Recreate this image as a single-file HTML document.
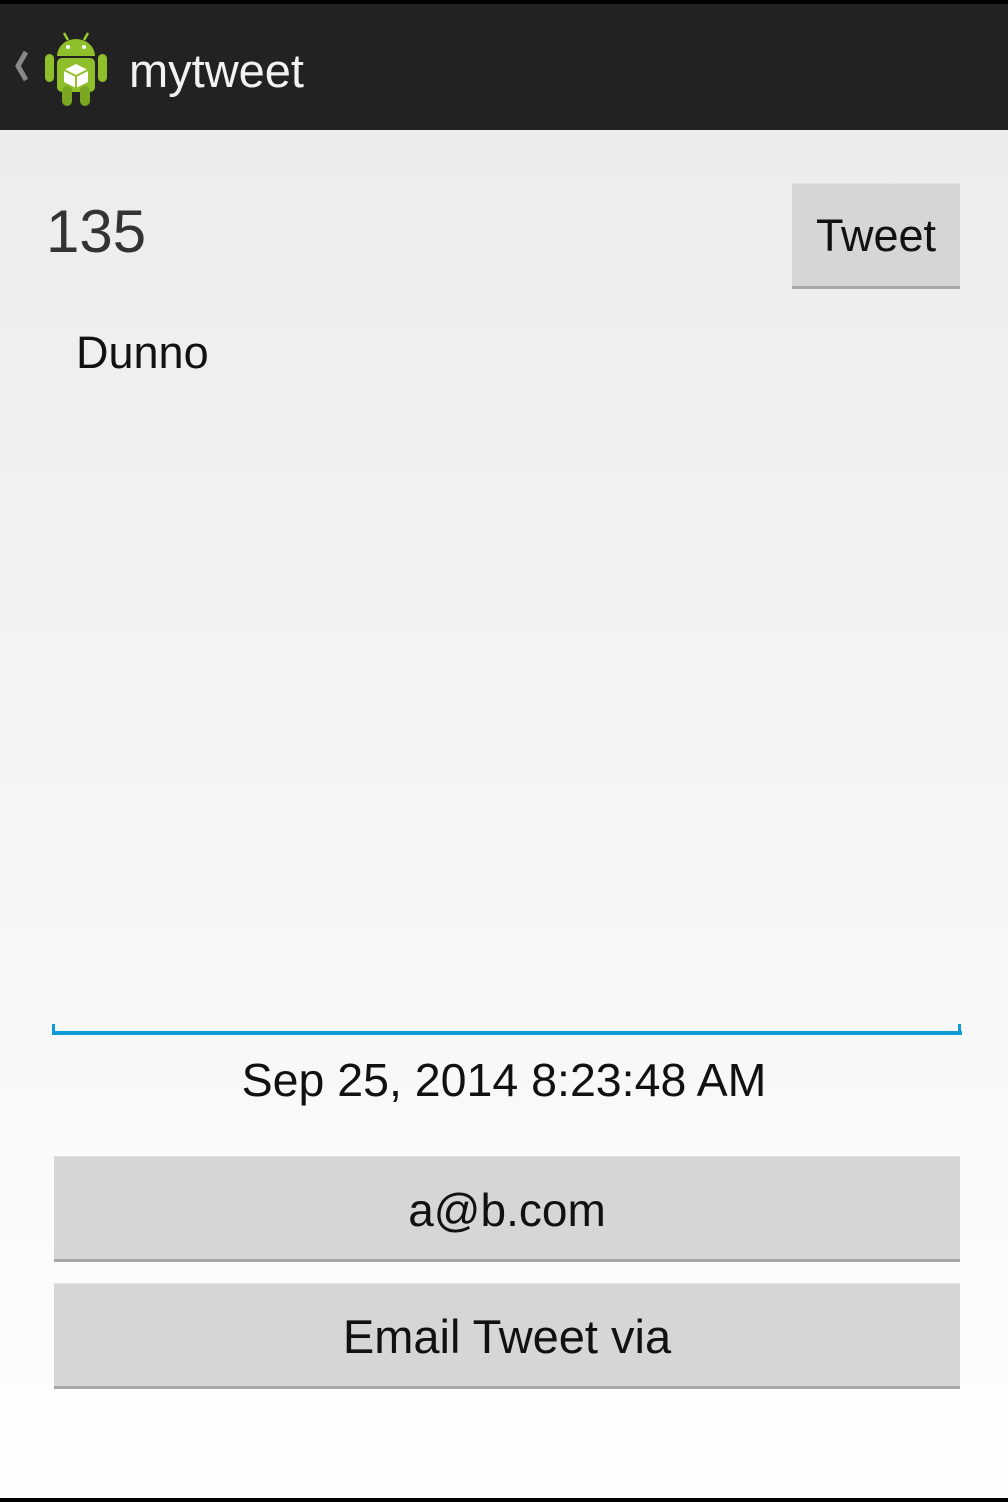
<!DOCTYPE html>
<html><head><style>
*{margin:0;padding:0;box-sizing:border-box}
body{width:1008px;height:1502px;overflow:hidden;font-family:"Liberation Sans",sans-serif;background:linear-gradient(#ececec 130px,#fefefe 1498px);position:relative}
.bar{position:absolute;left:0;top:0;width:1008px;height:130px;background:#222;border-top:4px solid #000}
.t{position:absolute;white-space:nowrap;line-height:1}
.btn{position:absolute;background:#d6d6d6;border-bottom:3px solid #a8a8a8;box-shadow:0 -1px 0 #e4e4e4;text-align:center;color:#111;font-size:46px}
</style></head><body>
<div class="bar">
<svg style="position:absolute;left:10px;top:45px" width="22" height="34"><path d="M16 3 L8 17 L16 31" stroke="#888" stroke-width="5" fill="none"/></svg>
<svg style="position:absolute;left:44px;top:26px" width="64" height="78" viewBox="0 0 64 78">
<line x1="20" y1="3" x2="24" y2="10" stroke="#9c3" stroke-width="2.5"/><line x1="44" y1="3" x2="40" y2="10" stroke="#9c3" stroke-width="2.5"/>
<path d="M13 26 A19 17 0 0 1 51 26 Z" fill="#8fbf2a"/>
<rect x="13" y="28" width="38" height="34" rx="5" fill="#8fbf2a"/>
<rect x="1" y="24" width="9" height="28" rx="4.5" fill="#8fbf2a"/><rect x="54" y="24" width="9" height="28" rx="4.5" fill="#8fbf2a"/>
<rect x="18" y="56" width="10" height="20" rx="5" fill="#7aa622"/><rect x="36" y="56" width="10" height="20" rx="5" fill="#7aa622"/>
<circle cx="24" cy="17" r="2" fill="#fff"/><circle cx="40" cy="17" r="2" fill="#fff"/>
<path d="M32 34 L44 40 L44 52 L32 58 L20 52 L20 40 Z" fill="#fff"/><path d="M20 40 L32 46 L44 40 M32 46 L32 58" stroke="#8fbf2a" stroke-width="2" fill="none"/>
</svg>
<div class="t" style="left:129px;top:43px;font-size:47px;color:#f2f2f2">mytweet</div>
</div>
<div class="t" style="left:46px;top:202px;font-size:60px;color:#333">135</div>
<div class="btn" style="left:792px;top:184px;width:168px;height:105px;line-height:104px;font-size:45px">Tweet</div>
<div class="t" style="left:76px;top:330px;font-size:45px;color:#111">Dunno</div>
<div style="position:absolute;left:52px;top:1031px;width:910px;height:4px;background:#0f9bd7"></div>
<div style="position:absolute;left:52px;top:1024px;width:3px;height:10px;background:#0f9bd7"></div>
<div class="t" style="left:958px;top:1024px;width:3px;height:10px;background:#0f9bd7"></div>
<div class="t" style="left:0;width:1008px;text-align:center;top:1057px;font-size:46.5px;color:#111">Sep 25, 2014 8:23:48 AM</div>
<div class="btn" style="left:54px;top:1157px;width:906px;height:105px;line-height:106px">a@b.com</div>
<div class="btn" style="left:54px;top:1284px;width:906px;height:105px;line-height:106px;font-size:47px">Email Tweet via</div>
<div style="position:absolute;left:0;top:1498px;width:1008px;height:4px;background:#000"></div>
</body></html>
